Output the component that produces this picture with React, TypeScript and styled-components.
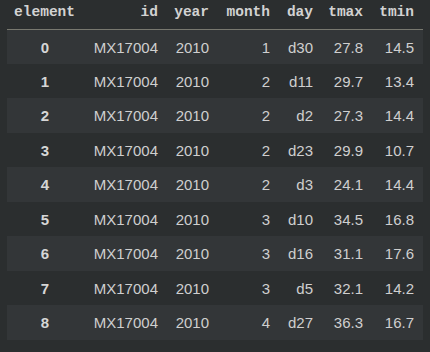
import { createGlobalStyle, styled } from 'styled-components'

type Row = {
  id: string
  year: number
  month: number
  day: string
  tmax: string
  tmin: string
}

const rows: Row[] = [
  { id: 'MX17004', year: 2010, month: 1, day: 'd30', tmax: '27.8', tmin: '14.5' },
  { id: 'MX17004', year: 2010, month: 2, day: 'd11', tmax: '29.7', tmin: '13.4' },
  { id: 'MX17004', year: 2010, month: 2, day: 'd2', tmax: '27.3', tmin: '14.4' },
  { id: 'MX17004', year: 2010, month: 2, day: 'd23', tmax: '29.9', tmin: '10.7' },
  { id: 'MX17004', year: 2010, month: 2, day: 'd3', tmax: '24.1', tmin: '14.4' },
  { id: 'MX17004', year: 2010, month: 3, day: 'd10', tmax: '34.5', tmin: '16.8' },
  { id: 'MX17004', year: 2010, month: 3, day: 'd16', tmax: '31.1', tmin: '17.6' },
  { id: 'MX17004', year: 2010, month: 3, day: 'd5', tmax: '32.1', tmin: '14.2' },
  { id: 'MX17004', year: 2010, month: 4, day: 'd27', tmax: '36.3', tmin: '16.7' },
]

const columns = ['element', 'id', 'year', 'month', 'day', 'tmax', 'tmin']
const widths = [77, 83, 51, 61, 43, 50, 51]

export default function App() {
  return (
    <>
      <GlobalStyle />
      <Output>
        <Frame>
          <colgroup>
            {widths.map((w, i) => (
              <col key={i} style={{ width: w }} />
            ))}
          </colgroup>
          <thead>
            <tr>
              {columns.map((c) => (
                <HeadCell key={c}>{c}</HeadCell>
              ))}
            </tr>
          </thead>
          <tbody>
            {rows.map((r, i) => (
              <BodyRow key={i} $striped={i % 2 === 0}>
                <IndexCell>{i}</IndexCell>
                <Cell>{r.id}</Cell>
                <Cell>{r.year}</Cell>
                <Cell>{r.month}</Cell>
                <Cell>{r.day}</Cell>
                <Cell>{r.tmax}</Cell>
                <Cell>{r.tmin}</Cell>
              </BodyRow>
            ))}
          </tbody>
        </Frame>
      </Output>
    </>
  )
}

const GlobalStyle = createGlobalStyle`
  html, body {
    margin: 0;
    padding: 0;
    background: #2b2e2f;
  }
`

const Output = styled.div`
  width: 430px;
  height: 352px;
  padding: 0 7px;
  box-sizing: border-box;
  background: #2b2e2f;
  overflow: hidden;
`

const Frame = styled.table`
  width: 416px;
  table-layout: fixed;
  border-collapse: collapse;
  border-spacing: 0;
`

const HeadCell = styled.th`
  height: 29px;
  padding: 0 9px 0 0;
  box-sizing: border-box;
  border-bottom: 1px solid #78786f;
  text-align: right;
  vertical-align: middle;
  font-family: 'Liberation Mono', 'DejaVu Sans Mono', monospace;
  font-size: 14.5px;
  font-weight: bold;
  line-height: 14px;
  color: #d2d2d2;
  padding-bottom: 4px;
  white-space: nowrap;
`

const BodyRow = styled.tr<{ $striped: boolean }>`
  height: 34.5px;
  background: ${({ $striped }) => ($striped ? '#333638' : 'transparent')};
`

const Cell = styled.td`
  padding: 1px 9px 0 0;
  text-align: right;
  vertical-align: middle;
  font-family: 'Liberation Sans', Arial, sans-serif;
  font-size: 15px;
  color: #cfcfcf;
  white-space: nowrap;
`

const IndexCell = styled(Cell)`
  padding-left: 8px;
  text-align: center;
  font-weight: bold;
  color: #d6d6d6;
`
